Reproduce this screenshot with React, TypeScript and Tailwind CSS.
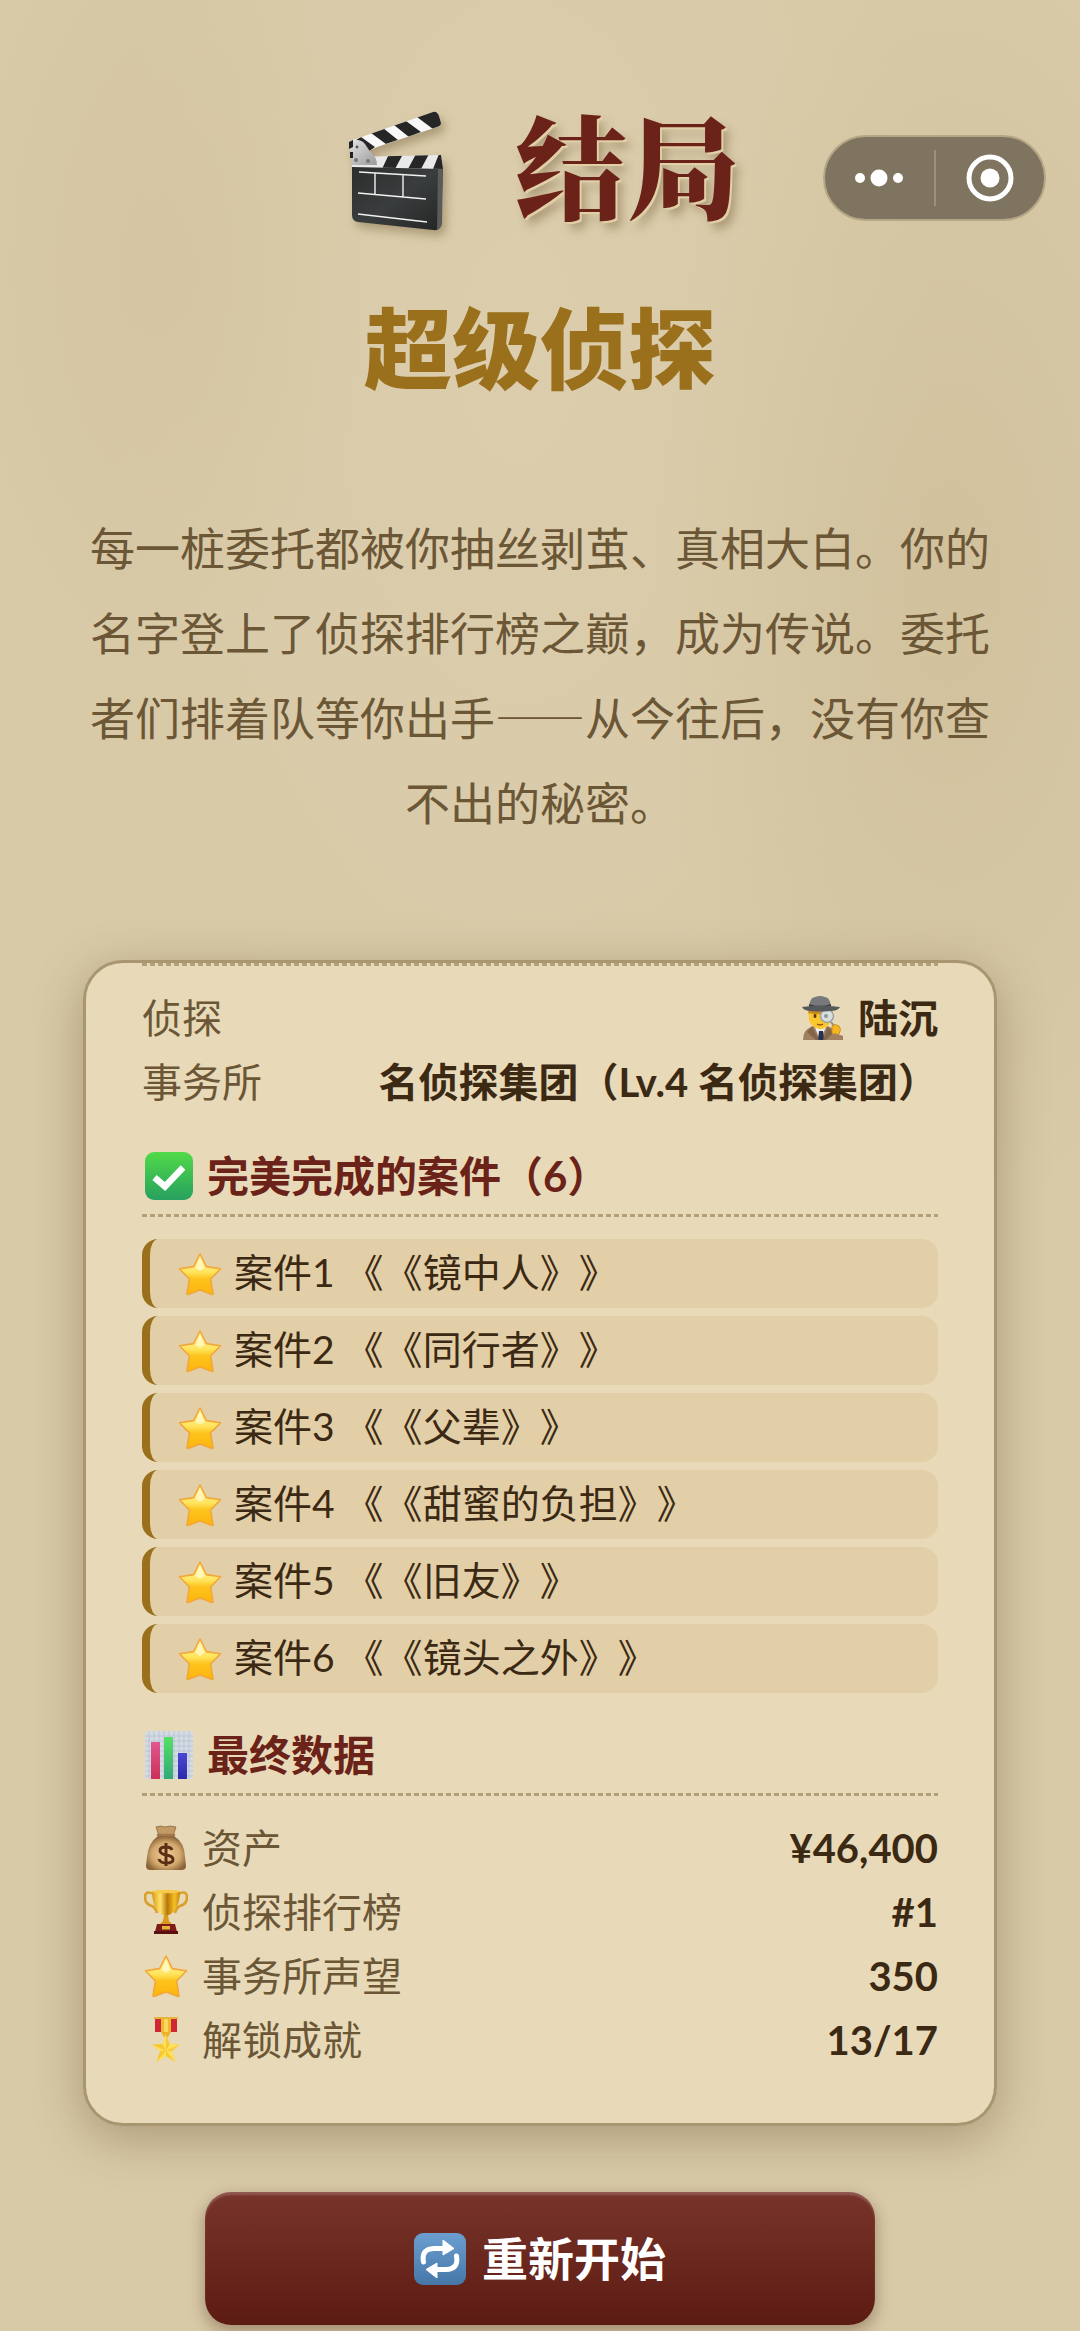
import React from 'react';

type IconProps = { className?: string };

const ClapperIcon = ({ className }: IconProps) => (
  <svg viewBox="0 0 96 120" className={className} aria-hidden="true">
    <defs>
      <linearGradient id="slate" x1="0" y1="0" x2="1" y2="1">
        <stop offset="0" stopColor="#2b2d2d" />
        <stop offset="0.5" stopColor="#3a3d3d" />
        <stop offset="1" stopColor="#242626" />
      </linearGradient>
      <linearGradient id="hinge" x1="0" y1="0" x2="1" y2="1">
        <stop offset="0" stopColor="#e4e4e4" />
        <stop offset="1" stopColor="#9a9a9a" />
      </linearGradient>
      <clipPath id="armTop">
        <path d="M4 29L84 1Q88 0 90 5L92 12Q92 15 88 16L28 36L20 40L4 36Z" />
      </clipPath>
      <clipPath id="armBottom">
        <path d="M3 46L92 44L94 58L3 56Z" />
      </clipPath>
    </defs>
    <path d="M3 54L94 56L92 114Q91 120 84 119L9 111Q3 110 3 104Z" fill="url(#slate)" />
    <path d="M89 56L94 54L93 113Q92 117 88 119Z" fill="#5a5c5c" />
    <g clipPath="url(#armTop)">
      <rect width="96" height="60" fill="#f8f8f8" />
      <path d="M2 32L12 26L26 36L18 42ZM22 22L34 17L49 29L37 33ZM45 14L57 10L72 21L60 26ZM68 6L86 -2L98 12L84 18Z" fill="#262626" />
    </g>
    <g clipPath="url(#armBottom)">
      <rect y="40" width="96" height="20" fill="#e9e9e9" />
      <path d="M40 43H54L46 58H33ZM67 43H80L72 58H59ZM90 43H96V58H84Z" fill="#262626" />
    </g>
    <path d="M0 31L3 29Q12 28 16 33L22 42Q28 46 28 54L2 54L3 42L0 38Z" fill="url(#hinge)" />
    <path d="M0 31L4 29V36L0 38ZM1 41H4V47H1Z" fill="#222" />
    <circle cx="8" cy="36" r="1.4" fill="#555" />
    <circle cx="7" cy="49" r="2" fill="#777" />
    <circle cx="19" cy="50" r="2" fill="#777" />
    <path d="M10 61L77 65M9 82L77 88M26 62V83M54 63V86M9 103L78 111" stroke="#f1f1f1" strokeWidth="1.4" fill="none" />
  </svg>
);

const StarIcon = ({ className }: IconProps) => (
  <svg viewBox="0 0 44 44" className={className} aria-hidden="true">
    <defs>
      <linearGradient id="star" x1="0" y1="0" x2="0" y2="1">
        <stop offset="0" stopColor="#fff6a8" />
        <stop offset="0.45" stopColor="#ffe45c" />
        <stop offset="0.62" stopColor="#fdc31c" />
        <stop offset="1" stopColor="#fdb40f" />
      </linearGradient>
    </defs>
    <path
      d="M22 2L28.4 14.6L42.5 16.8L32.6 27L35 41.6Q35 42.6 34 42.4L22 38L10 42.4Q9 42.6 9 41.6L11.4 27L1.5 16.8L15.6 14.6Z"
      fill="url(#star)"
      stroke="#f3a63a"
      strokeWidth="1.6"
      strokeLinejoin="round"
    />
    <path d="M22 6L26.5 16L22 19L17.5 16Z" fill="#fffbd6" opacity="0.7" />
  </svg>
);

const CheckIcon = ({ className }: IconProps) => (
  <svg viewBox="0 0 48 48" className={className} aria-hidden="true">
    <defs>
      <linearGradient id="check" x1="0" y1="0" x2="0" y2="1">
        <stop offset="0" stopColor="#51da48" />
        <stop offset="1" stopColor="#27a05f" />
      </linearGradient>
    </defs>
    <rect width="48" height="48" rx="9" fill="url(#check)" />
    <path d="M9.500 25.500L20 34.500L38 15.500" fill="none" stroke="#fff" strokeWidth="6.500" />
  </svg>
);

const ChartIcon = ({ className }: IconProps) => (
  <svg viewBox="0 0 48 48" className={className} aria-hidden="true">
    <defs>
      <linearGradient id="barRed" x1="0" y1="0" x2="0" y2="1">
        <stop offset="0" stopColor="#e0578f" />
        <stop offset="1" stopColor="#cc2f58" />
      </linearGradient>
      <linearGradient id="barGreen" x1="0" y1="0" x2="0" y2="1">
        <stop offset="0" stopColor="#55e063" />
        <stop offset="1" stopColor="#33a878" />
      </linearGradient>
      <linearGradient id="barBlue" x1="0" y1="0" x2="0" y2="1">
        <stop offset="0" stopColor="#4a49d6" />
        <stop offset="1" stopColor="#2c2aa8" />
      </linearGradient>
    </defs>
    <rect width="48" height="48" rx="3" fill="#d5dbe2" />
    <path
      d="M0 5H48M0 10H48M0 15H48M0 20H48M0 25H48M0 30H48M0 35H48M0 40H48M0 45H48M4 0V48M9 0V48M14 0V48M19 0V48M24 0V48M29 0V48M34 0V48M39 0V48M44 0V48"
      stroke="#b4c0d4"
      strokeWidth="0.8"
    />
    <rect x="6" y="11" width="9" height="37" fill="url(#barRed)" />
    <rect x="19" y="6" width="9" height="42" fill="url(#barGreen)" />
    <rect x="33" y="22" width="9" height="26" fill="url(#barBlue)" />
  </svg>
);

const DetectiveIcon = ({ className }: IconProps) => (
  <svg viewBox="0 0 42 44" className={className} aria-hidden="true">
    <path d="M1 44Q1 34 9 31L17 28L27 31Q36 33 38 44Z" fill="#a18060" />
    <path d="M12 29L18 44L25 29Z" fill="#eef1f4" />
    <path d="M17 35H21L22 44H16Z" fill="#26324f" />
    <path d="M10 30L5 36L14 44H17ZM26 30L31 37L24 44H21Z" fill="#83654a" />
    <path d="M6 12H30Q32 20 28 27Q23 34 17 33Q9 31 7 24Z" fill="#fbc72f" />
    <path d="M7 14H30V16Q18 20 6 17Z" fill="#c98d1e" />
    <ellipse cx="13" cy="20" rx="1.5" ry="2" fill="#5a3510" />
    <path d="M15 28Q18 30 21 28" stroke="#8a4b12" strokeWidth="1.5" fill="none" />
    <circle cx="25" cy="20" r="6.5" fill="#d7dedf" stroke="#9aa09f" strokeWidth="1.4" />
    <circle cx="24" cy="20" r="2" fill="#8e989c" />
    <path d="M29 26L33 31" stroke="#8c8c8c" strokeWidth="2" />
    <path d="M30 30Q33 27 37 30Q40 33 37 38Q33 41 30 37Z" fill="#f6b621" stroke="#c8831a" strokeWidth="0.8" />
    <path d="M32 37L41 40V44H31Z" fill="#a18060" />
    <path d="M7 11Q8 1 13 1Q18 -1 23 1Q28 1 29 11Z" fill="#77797a" />
    <path d="M7 8Q18 12 29 8V12H7Z" fill="#3c3e42" />
    <path d="M0 11Q18 8 38 11Q36 15 28 15Q18 16 9 15Q2 15 0 11Z" fill="#56595c" />
  </svg>
);

const MoneyBagIcon = ({ className }: IconProps) => (
  <svg viewBox="0 0 44 46" className={className} aria-hidden="true">
    <defs>
      <radialGradient id="bag" cx="0.5" cy="0.55" r="0.55">
        <stop offset="0" stopColor="#f0d09a" />
        <stop offset="0.65" stopColor="#d2a76c" />
        <stop offset="1" stopColor="#8b6438" />
      </radialGradient>
    </defs>
    <path d="M14 11H30Q41 18 41 32L42 41Q42 45 38 45H6Q2 45 2 41L3 32Q4 18 14 11Z" fill="url(#bag)" />
    <path d="M12 2Q17 0 21 2Q26 0 32 2L29 11H15Z" fill="#c49a64" stroke="#8d683e" strokeWidth="0.8" />
    <path d="M14 10H30" stroke="#a07a4c" strokeWidth="2.5" strokeLinecap="round" />
    <path
      d="M28 25Q27 22 22 22Q16 22 16 25.5Q16 28.5 22 30Q29 31 29 34.5Q29 38 22 38Q16 38 15 34M22 18V41"
      fill="none"
      stroke="#593016"
      strokeWidth="3"
    />
  </svg>
);

const TrophyIcon = ({ className }: IconProps) => (
  <svg viewBox="0 0 44 46" className={className} aria-hidden="true">
    <defs>
      <linearGradient id="cup" x1="0" y1="0" x2="1" y2="0">
        <stop offset="0" stopColor="#d99a12" />
        <stop offset="0.3" stopColor="#ffe26a" />
        <stop offset="0.55" stopColor="#b87607" />
        <stop offset="0.8" stopColor="#f6bf26" />
        <stop offset="1" stopColor="#c98a10" />
      </linearGradient>
    </defs>
    <path d="M10 5Q1 1 1 8Q1 15 8 17Q12 19 13 24M34 5Q43 1 43 8Q43 15 36 17Q32 19 31 24" fill="none" stroke="#d9a02c" strokeWidth="2.6" />
    <path d="M8 2H36Q36 15 31 21Q27 26 24 26H20Q17 26 13 21Q8 15 8 2Z" fill="url(#cup)" />
    <ellipse cx="22" cy="2.5" rx="14" ry="1.8" fill="#f7cb4a" />
    <path d="M20 26H24L25 32L29 36H15L19 32Z" fill="#d99a1c" />
    <path d="M13 35H31L33 43H11Z" fill="#7d1c18" />
    <rect x="18" y="37" width="8" height="3.5" fill="#e5b53a" />
    <path d="M10 42H34V45H10Z" fill="#5a100e" />
  </svg>
);

const MedalIcon = ({ className }: IconProps) => (
  <svg viewBox="0 0 44 46" className={className} aria-hidden="true">
    <rect x="11" y="1" width="22" height="14" fill="#cf2734" />
    <rect x="17" y="1" width="10" height="14" fill="#eeb92c" />
    <rect x="20" y="1" width="4" height="14" fill="#f8d862" />
    <path d="M10 0H34V2H10Z" fill="#e8b33a" />
    <path d="M17 15H27L24 20H20Z" fill="#eab22b" />
    <path d="M22 17L25.5 27L36 27.500L28 34L31.500 45L22 39L12.500 45L16 34L8 27.500L18.500 27Z" fill="#f7c92f" />
    <path d="M22 17V34L18.500 27ZM36 27.500L22 34L25.500 27ZM31.500 45L22 34L28 34ZM12.500 45L22 34V39ZM8 27.500L22 34H16Z" fill="#ffe05c" />
  </svg>
);

const RepeatIcon = ({ className }: IconProps) => (
  <svg viewBox="0 0 52 52" className={className} aria-hidden="true">
    <defs>
      <linearGradient id="repeat" x1="0" y1="0" x2="0" y2="1">
        <stop offset="0" stopColor="#6c9fd0" />
        <stop offset="1" stopColor="#4577a8" />
      </linearGradient>
    </defs>
    <rect width="52" height="52" rx="9" fill="url(#repeat)" />
    <path
      d="M9.500 29Q7 16 20 15.500H30M42.500 23Q45 36 32 36.500H22"
      fill="none"
      stroke="#fff"
      strokeWidth="5"
      strokeLinecap="round"
    />
    <path d="M29 7L40 15.500L29 22ZM23 30L12 36.500L23 45Z" fill="#fff" stroke="#fff" strokeLinejoin="round" />
  </svg>
);

const cases = ['镜中人', '同行者', '父辈', '甜蜜的负担', '旧友', '镜头之外'];

const stats = [
  { icon: MoneyBagIcon, label: '资产', value: '¥46,400' },
  { icon: TrophyIcon, label: '侦探排行榜', value: '#1' },
  { icon: StarIcon, label: '事务所声望', value: '350' },
  { icon: MedalIcon, label: '解锁成就', value: '13/17' },
];

const DashedLine = () => (
  <div className="h-[3px] bg-[repeating-linear-gradient(90deg,#b29f77_0_5px,transparent_5px_8px)]" />
);

const SectionTitle = ({ icon: Icon, children }: { icon: React.FC<IconProps>; children: React.ReactNode }) => (
  <div className="mt-8">
    <h3 className="flex items-center gap-3.5 pb-2 pl-[3px] text-[42px] leading-[60px] font-bold text-[#6b2218]">
      <Icon className="h-12 w-12 shrink-0" />
      <span>{children}</span>
    </h3>
    <DashedLine />
  </div>
);

const CapsuleMenu = () => (
  <div className="absolute top-[135px] right-[34px] flex h-[86px] w-[223px] items-center rounded-full border-2 border-[#b5a685] bg-[#7f745f]">
    <button type="button" aria-label="更多" className="flex h-full flex-1 items-center justify-center">
      <svg viewBox="0 0 48 18" className="h-[18px] w-12" fill="#fff" aria-hidden="true">
        <circle cx="5" cy="9" r="5" />
        <circle cx="24" cy="9" r="8.5" />
        <circle cx="43" cy="9" r="5" />
      </svg>
    </button>
    <div className="h-14 w-0.5 bg-[#9c917b]" />
    <button type="button" aria-label="关闭" className="flex h-full flex-1 items-center justify-center">
      <svg viewBox="0 0 48 48" className="h-12 w-12" aria-hidden="true">
        <circle cx="24" cy="24" r="21" fill="none" stroke="#fff" strokeWidth="5" />
        <circle cx="24" cy="24" r="9.5" fill="#fff" />
      </svg>
    </button>
  </div>
);

const App = () => {
  return (
    <main
      lang="zh-CN"
      className="relative flex min-h-screen flex-col bg-[#d8c9a7] bg-[radial-gradient(ellipse_200px_400px_at_170px_270px,rgba(190,165,120,0.14),transparent),radial-gradient(ellipse_300px_640px_at_88%_25%,rgba(180,160,115,0.2),transparent),radial-gradient(ellipse_420px_800px_at_48%_15%,rgba(226,214,184,0.35),transparent)] pt-[99px] pb-[5px] font-['Lato','Noto_Sans_CJK_SC',sans-serif] [text-spacing-trim:space-all]"
    >
      <CapsuleMenu />

      <header className="flex flex-col items-center">
        <h1 className="flex items-center gap-[70px] pl-2 font-['Noto_Serif_CJK_SC','Noto_Sans_CJK_SC',serif] text-[112px] leading-[128px] font-black text-[#6b2218]">
          <ClapperIcon className="h-[120px] w-24 drop-shadow-[4px_6px_5px_rgba(90,65,30,0.35)]" />
          <span className="pb-4 [text-shadow:2px_2px_0_#e2cfa6,6px_8px_10px_rgba(90,65,30,0.35)]">结局</span>
        </h1>
        <h2 className="mt-[45px] text-[88px] leading-[120px] font-black text-[#9a701d]">超级侦探</h2>
      </header>

      <p className="mt-24 px-[90px] text-center font-['Noto_Sans_CJK_SC',sans-serif] text-[45px] leading-[85px] text-[#6b5636]">
        每一桩委托都被你抽丝剥茧、真相大白。你的名字登上了侦探排行榜之巅，成为传说。委托者们排着队等你出手——从今往后，没有你查不出的秘密。
      </p>

      <section className="mx-[83px] mt-29 rounded-[40px] border-[3px] border-[#a89670] bg-[#e8dab8] px-14 pb-[51px] shadow-[0_12px_48px_rgba(90,65,30,0.35)]">
        <DashedLine />
        <dl className="mt-5 text-[40px] leading-[64px]">
          <div className="flex justify-between">
            <dt className="text-[#6b5636]">侦探</dt>
            <dd className="flex items-center gap-3.5 font-bold text-[#3b2914]">
              <DetectiveIcon className="h-11 w-[42px]" />
              陆沉
            </dd>
          </div>
          <div className="flex justify-between">
            <dt className="text-[#6b5636]">事务所</dt>
            <dd className="font-bold text-[#3b2914]">名侦探集团（Lv.4 名侦探集团）</dd>
          </div>
        </dl>

        <SectionTitle icon={CheckIcon}>完美完成的案件（6）</SectionTitle>
        <ul className="mt-[22px] flex flex-col gap-2">
          {cases.map((name, index) => (
            <li
              key={name}
              className="flex h-[69px] items-center gap-3 rounded-2xl border-l-8 border-[#9a701d] bg-[#e2cfa7] pl-7 text-[39px] leading-[64px] text-[#3b2914]"
            >
              <StarIcon className="h-11 w-11 shrink-0" />
              <span className="pb-1">
                案件{index + 1} 《《{name}》》
              </span>
            </li>
          ))}
        </ul>

        <SectionTitle icon={ChartIcon}>最终数据</SectionTitle>
        <dl className="mt-5 text-[40px] leading-[64px]">
          {stats.map(({ icon: Icon, label, value }) => (
            <div key={label} className="flex justify-between">
              <dt className="flex items-center gap-3.5 pl-0.5 text-[#6b5636]">
                <Icon className="h-[46px] w-11 shrink-0" />
                {label}
              </dt>
              <dd className="font-bold text-[#3b2914]">{value}</dd>
            </div>
          ))}
        </dl>
      </section>

      <button
        type="button"
        className="mx-auto mt-[66px] flex h-[133px] w-[62%] items-center justify-center gap-4 rounded-[26px] bg-linear-to-b from-[#78342b] to-[#5c1b12] text-[46px] leading-[64px] font-bold text-white shadow-[0_6px_16px_rgba(70,40,20,0.4),inset_0_3px_2px_rgba(255,255,255,0.18)]"
      >
        <RepeatIcon className="h-[52px] w-[52px]" />
        重新开始
      </button>
    </main>
  );
};

export default App;
